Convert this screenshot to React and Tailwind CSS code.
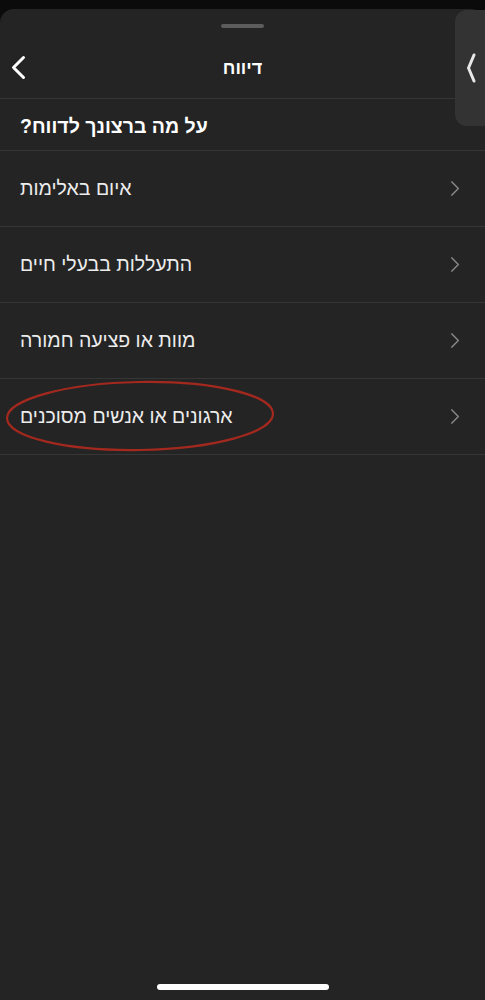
import React from 'react';

const items = [
  'איום באלימות',
  'התעללות בבעלי חיים',
  'מוות או פציעה חמורה',
  'ארגונים או אנשים מסוכנים',
];

const Chevron = ({ className, dir = 'right', stroke = 2 }) => (
  <svg viewBox="0 0 12 20" className={className} fill="none" stroke="currentColor" strokeWidth={stroke} strokeLinecap="round" strokeLinejoin="round">
    {dir === 'right' ? <path d="M2 2l8 8-8 8" /> : <path d="M10 2L2 10l8 8" />}
  </svg>
);

const App = () => {
  return (
    <div className="w-[485px] h-[1000px] bg-[#0b0b0b] flex flex-col relative overflow-hidden" style={{ fontFamily: '"Liberation Sans", Arial, sans-serif' }}>
      <div className="h-[9px] shrink-0" />
      {/* Sheet */}
      <div className="flex-1 bg-[#242424] rounded-t-[14px] flex flex-col relative">
        {/* Grabber */}
        <div className="flex justify-center pt-[15px]">
          <div className="w-[43px] h-[4px] rounded-full bg-[#5c5c5c]" />
        </div>

        {/* Header */}
        <div className="h-[71px] flex items-center relative border-b border-[#363636]">
          <Chevron dir="left" stroke={2.4} className="absolute left-[11px] top-[27px] w-[15px] h-[25px] text-white" />
          <div className="flex-1 text-center text-white font-bold text-[18px] pt-[10px]" dir="rtl">דיווח</div>
        </div>

        {/* Question */}
        <div className="h-[52px] flex items-center px-[20px] pt-[5px] border-b border-[#363636]">
          <span dir="rtl" className="text-white font-bold text-[19.5px]">על מה ברצונך לדווח?</span>
        </div>

        {/* Items */}
        {items.map((label) => (
          <div key={label} className="h-[76px] flex items-center justify-between pl-[20px] pr-[25px] border-b border-[#363636]">
            <span dir="rtl" className="text-[#ececec] text-[19.5px]">{label}</span>
            <Chevron className="w-[10px] h-[17px] text-[#8c8c8c]" stroke={1.6} />
          </div>
        ))}

        {/* Red highlight ellipse */}
        <svg className="absolute left-[4px] top-[370px] w-[272px] h-[74px]" viewBox="0 0 272 74" fill="none">
          <ellipse cx="136" cy="37" rx="133" ry="34" stroke="#a3291f" strokeWidth="2.2" transform="rotate(-1 136 37)" />
        </svg>

        <div className="flex-1" />
        {/* Home indicator */}
        <div className="flex justify-center pb-[10px]">
          <div className="w-[172px] h-[6px] rounded-full bg-white" />
        </div>
      </div>

      {/* Side tab */}
      <div className="absolute right-0 top-[10px] w-[30px] h-[116px] rounded-l-[12px] bg-[#333333] flex items-center justify-center">
        <svg viewBox="0 0 10 30" className="w-[10px] h-[30px] text-[#e8e8e8] ml-[2px]" fill="none" stroke="currentColor" strokeWidth="3" strokeLinecap="round" strokeLinejoin="round">
          <path d="M8 2L2.5 15L8 28" />
        </svg>
      </div>
    </div>
  );
};

export default App;
